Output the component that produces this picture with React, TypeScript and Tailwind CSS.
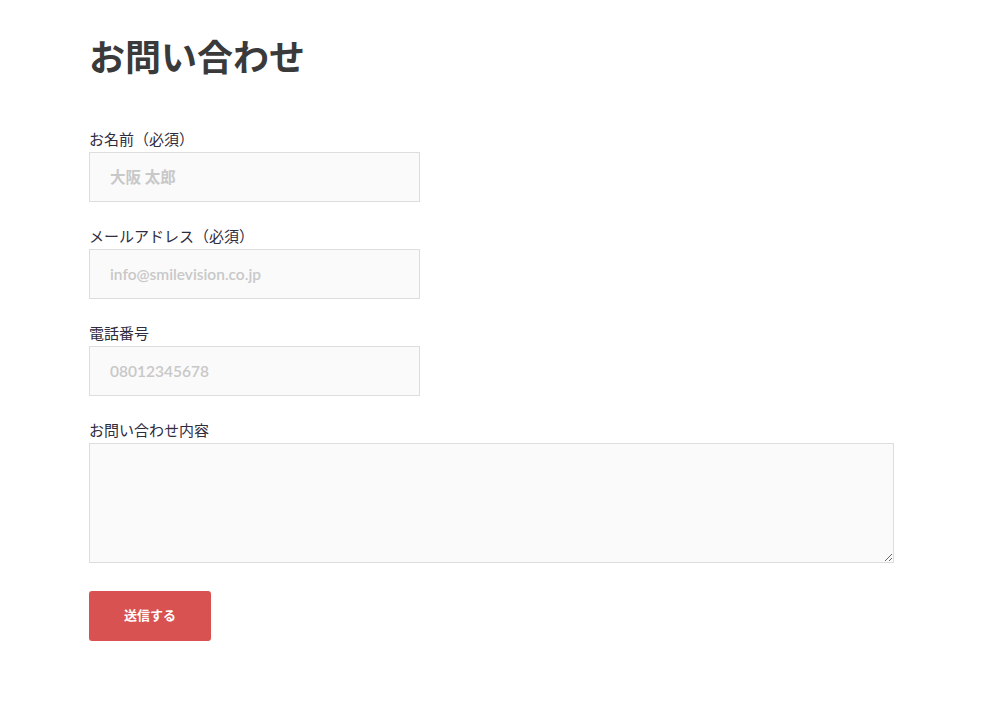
import * as React from "react"

const fields = [
  { label: "お名前（必須）", placeholder: "大阪 太郎", type: "text" },
  { label: "メールアドレス（必須）", placeholder: "info@smilevision.co.jp", type: "email" },
  { label: "電話番号", placeholder: "08012345678", type: "tel" },
]

export default function App() {
  return (
    <div className="min-h-[703px] bg-white font-['Lato','Noto_Sans_CJK_JP',sans-serif]">
      <div className="pl-[89px] pt-[32px]">
        {/* Title */}
        <h1 className="text-[36px] leading-[50px] font-bold text-[#3a3a3a] mb-[47px]">
          お問い合わせ
        </h1>

        <form className="flex flex-col">
          {fields.map((f) => (
            <div key={f.label} className="mb-[24px]">
              <label className="block text-[15px] leading-[20px] text-[#2f2c3e] mb-[3px]">
                {f.label}
              </label>
              <input
                type={f.type}
                placeholder={f.placeholder}
                className="block w-[331px] h-[50px] bg-[#fafafa] border border-[#dddddd] px-[20px] text-[15.5px] font-semibold text-[#333] placeholder:text-[#c8c8c8] outline-none"
              />
            </div>
          ))}

          <div className="mb-[28px]">
            <label className="block text-[15px] leading-[20px] text-[#2f2c3e] mb-[3px]">
              お問い合わせ内容
            </label>
            <textarea className="block w-[805px] h-[120px] bg-[#fafafa] border border-[#dddddd] outline-none" />
          </div>

          <button
            type="button"
            className="w-[122px] h-[50px] rounded-[3px] bg-[#d85252] text-white text-[13px] font-bold"
          >
            送信する
          </button>
        </form>
      </div>
    </div>
  )
}
